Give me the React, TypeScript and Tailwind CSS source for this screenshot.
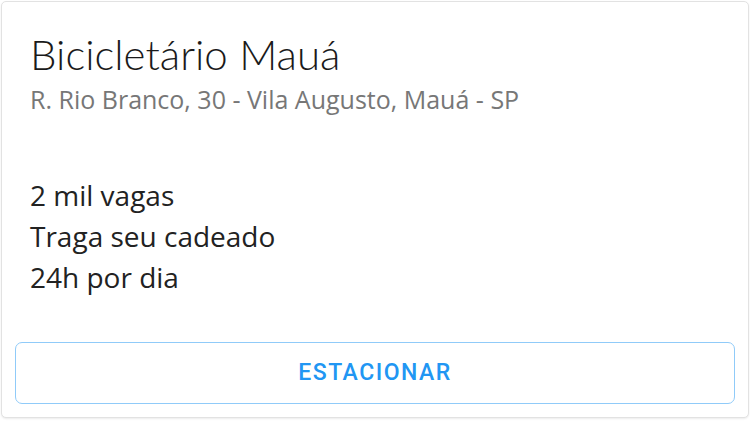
export default function App() {
  return (
    <div className="w-[750px] h-[441px] bg-white p-px">
      <div className="flex flex-col h-[417px] rounded-[5px] border border-[#e2e2e2] shadow-[0_1px_2px_rgba(0,0,0,0.08)] bg-white">
        <div className="flex-1 px-7 pt-[28px]">
          <h1
            className="text-[42px] leading-[48px] text-[#1a1a1a] font-light"
            style={{ fontFamily: "Lato, 'Noto Sans', sans-serif" }}
          >
            Bicicletário Mauá
          </h1>
          <p
            className="text-[25px] leading-[32px] text-[#777] mt-[5px]"
            style={{ fontFamily: "'Open Sans', sans-serif" }}
          >
            R. Rio Branco, 30 - Vila Augusto, Mauá - SP
          </p>
          <div
            className="mt-[60px] text-[28px] leading-[41px] text-[#222]"
            style={{ fontFamily: "'Open Sans', sans-serif" }}
          >
            <p>2 mil vagas</p>
            <p>Traga seu cadeado</p>
            <p>24h por dia</p>
          </div>
        </div>
        <div className="px-[13px] pb-[13px]">
          <button
            className="w-full h-[62px] rounded-[7px] border-[1.5px] border-[#90cbf9] text-[#2196f3] text-[23px] font-medium tracking-[0.065em]"
            style={{ fontFamily: "Roboto, sans-serif" }}
          >
            ESTACIONAR
          </button>
        </div>
      </div>
    </div>
  );
}
